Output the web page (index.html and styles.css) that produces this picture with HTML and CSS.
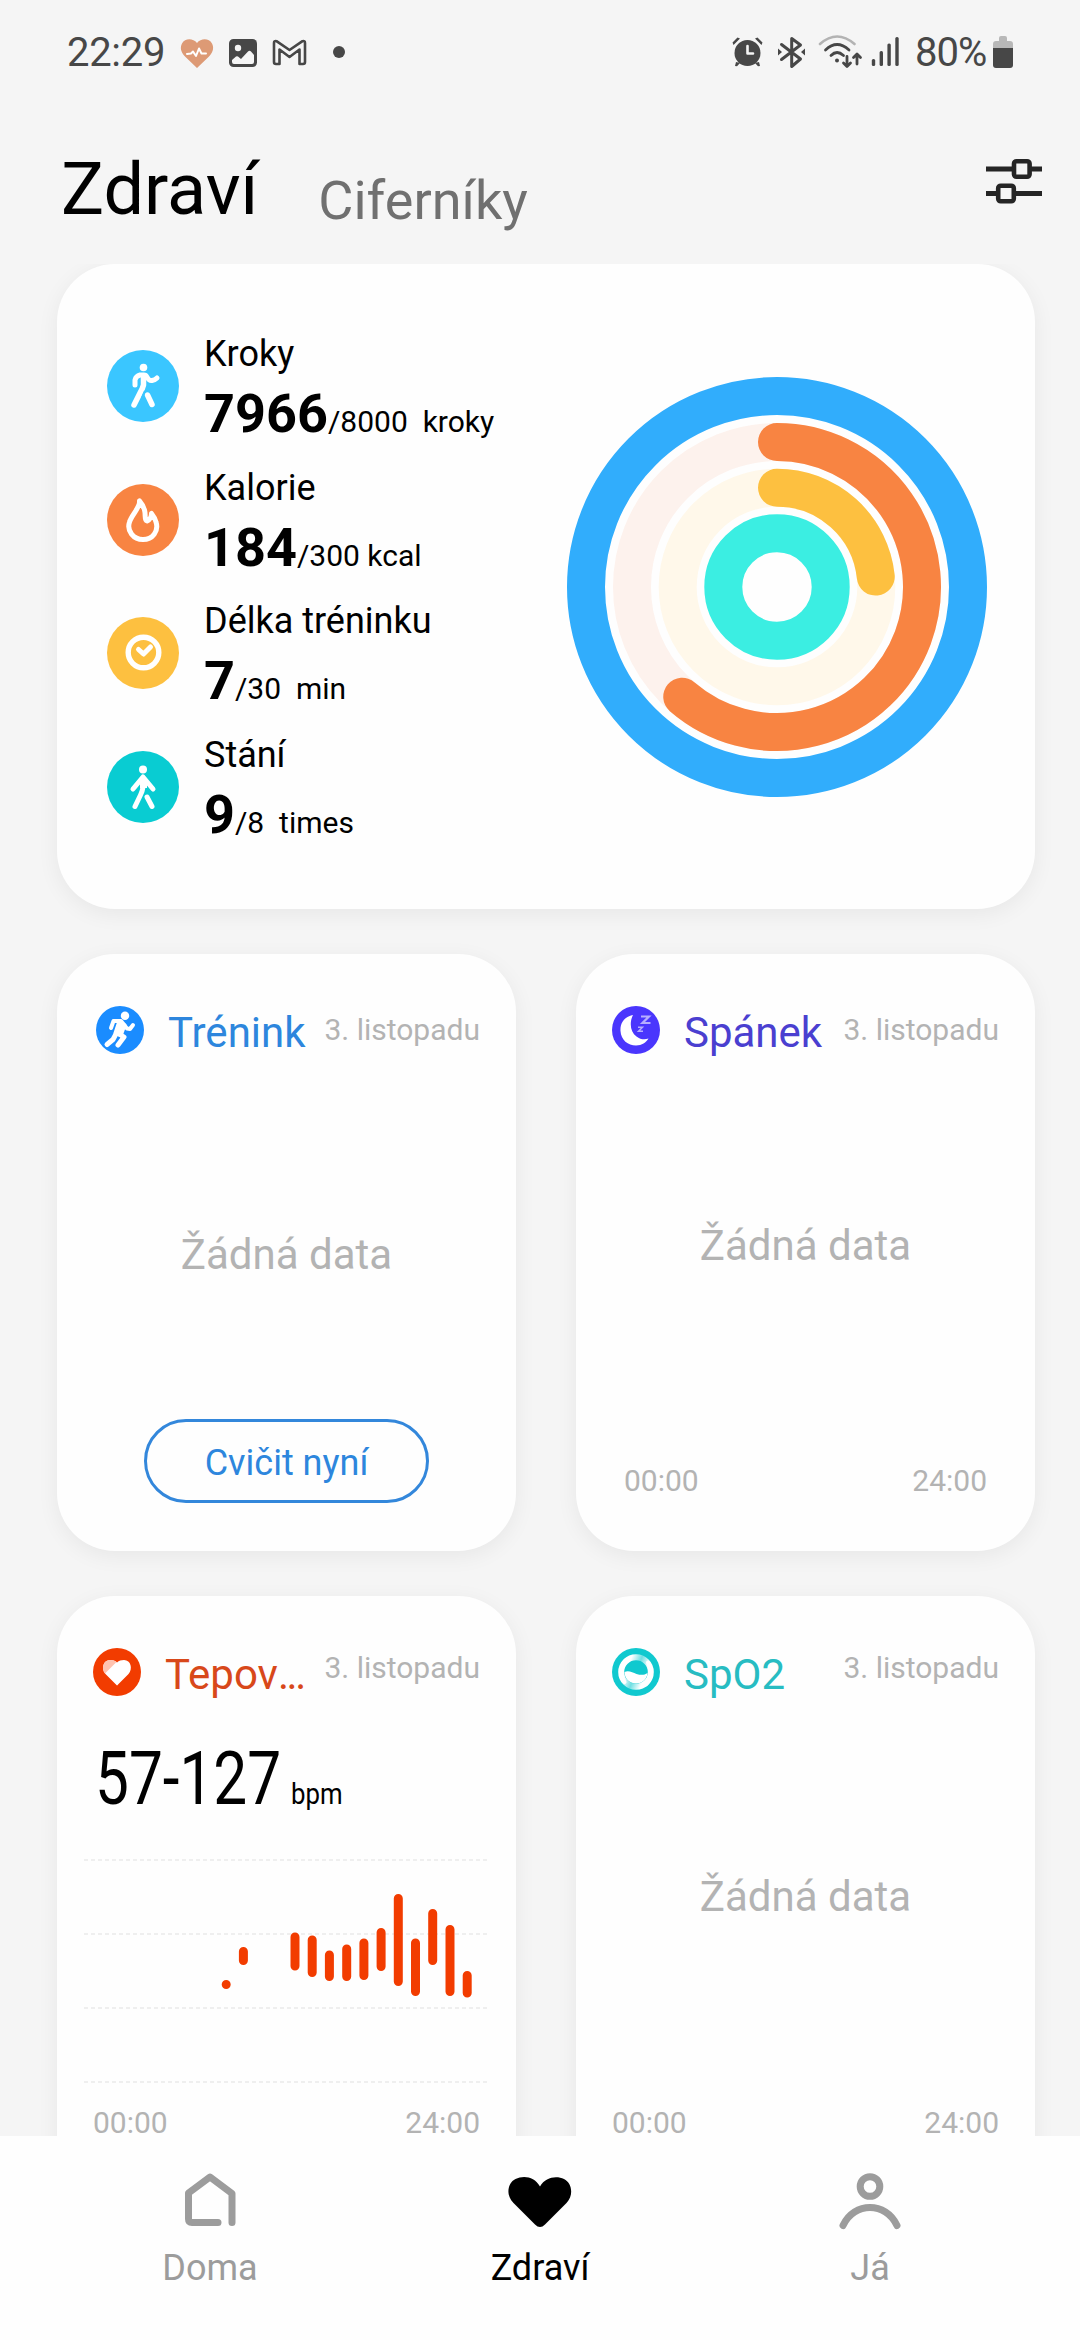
FILE: index.html
```html
<!DOCTYPE html>
<html lang="cs">
<head>
<meta charset="utf-8">
<title>Zdraví</title>
<link rel="stylesheet" href="styles.css">
</head>
<body>
<div class="screen">
  <header class="status">
    <span class="clock">22:29</span>
    <svg class="status-left" width="170" height="40" viewBox="178 32 170 40">
      <path fill="#dd9a75" d="M197 68 185 56.500C180.500 52 180 47 182 43.500c3-5.500 11-5.500 15-.5 4-5 12-5 15 .5 2 3.500 1.500 8.500-3 13z"/>
      <path class="line" stroke="#fff" stroke-width="2" d="m187 54 4-.5 2-2 3 4.500 3-7.500 2.500 5H206"/>
      <rect x="229" y="39" width="28" height="28" rx="4.500" fill="#474747"/>
      <circle cx="238" cy="48" r="3.200" fill="#f5f5f5"/>
      <path fill="#f5f5f5" d="M232 60l4-3.500q1-.7 2 0l3 2.500 7-7.500q1.500-1.300 3 0l3 3.500v7q0 2-2 2h-18q-2 0-2-2z"/>
      <path class="line" stroke="#474747" stroke-width="2.600" d="M274 62V43q0-2.500 2.500-1.800L289.500 50l13-8.800q2.500-.7 2.500 1.800v19q0 2-2 2h-3.500V49.500l-10 7.500-10-7.500V64H276q-2 0-2-2z"/>
      <circle cx="339" cy="52" r="6" fill="#474747"/>
    </svg>
    <svg class="status-right" width="172" height="40" viewBox="732 32 172 40">
      <g fill="#474747">
        <circle cx="747.500" cy="53" r="13"/>
        <path d="m733.500 45-1-2.500 5-5 2.500 1zM761.500 45l1-2.500-5-5-2.500 1zM735 66l1-4 4 1-3 3.200zM760 66l-1-4-4 1 3 3.200z"/>
        <path d="m778 48.500 4 3.500-4 3.500zM805 48.500l-4 3.500 4 3.500z"/>
        <circle cx="837" cy="60.500" r="2"/>
        <rect x="871.800" y="59" width="3.400" height="7" rx="1.500"/>
        <rect x="879.600" y="51" width="3.400" height="15" rx="1.500"/>
        <rect x="887.400" y="43.500" width="3.400" height="22.500" rx="1.500"/>
        <rect x="895.300" y="37" width="3.400" height="29" rx="1.500"/>
      </g>
      <path class="line" stroke="#f5f5f5" stroke-width="2.600" d="M747.500 46v7.500h5.500"/>
      <path class="line" stroke="#474747" stroke-width="3" d="m781.500 44.500 19 14.500-8.800 7.500V38.500l8.800 6.500-19 14.500"/>
      <path class="line" stroke="#b3b3b3" stroke-width="2.600" d="M820 44q17-15 34.500 0"/>
      <path class="line" stroke="#474747" stroke-width="2.800" d="M825.500 50q11.500-11 23.500 0M831 55.500q6-6 12.500 0M847 56.500V66m-3.500-3 3.500 3.500 3.500-3.500M857 64v-9.500m-3.500 3 3.500-3.500 3.500 3.500"/>
    </svg>
    <span class="percent">80%</span>
    <svg class="battery" width="20" height="32" viewBox="0 0 20 32">
      <path fill="#b8b8b8" d="M6 2q0-2 2-2h4q2 0 2 2v3h3q3 0 3 3v6H0V8q0-3 3-3h3z"/>
      <path fill="#474747" d="M0 12h20v17q0 3-3 3H3q-3 0-3-3z"/>
    </svg>
  </header>

  <nav class="tabs">
    <span class="tab-current">Zdraví</span>
    <span class="tab">Ciferníky</span>
    <svg class="filter" width="56" height="46" viewBox="986 158 56 46" fill="none" stroke="#252525">
      <path stroke-width="5" d="M986 169h27M1030 169h12M986 193.500h11M1014 193.500h28"/>
      <rect x="1014" y="161.200" width="15.600" height="15.600" rx="2.500" stroke-width="4.600"/>
      <rect x="998.200" y="185.700" width="15.600" height="15.600" rx="2.500" stroke-width="4.600"/>
    </svg>
  </nav>

  <main class="content">
    <section class="card summary">
      <ul class="metrics">
        <li class="metric">
          <svg class="badge" viewBox="0 0 72 72"><circle cx="36" cy="36" r="36" fill="#3ac6ff"/><circle cx="36.500" cy="17.500" r="3.800" fill="#fff"/><path class="line" stroke="#fff" stroke-width="5" d="M28 35v-5q1-4 5-5h4q2 0 3 2 2 4 5 3.500 3-.5 5-2.500"/><path class="line" stroke="#fff" stroke-width="5.500" d="M36.500 26v9q-1 4-3.500 8l-6 12M40.500 45l4.500 9.500"/><path d="M38 41l-3 7" stroke="#3ac6ff" stroke-width="2"/></svg>
          <div><p class="label">Kroky</p><p class="value"><b>7966</b>/8000&nbsp; kroky</p></div>
        </li>
        <li class="metric">
          <svg class="badge" viewBox="0 0 72 72"><circle cx="36" cy="36" r="36" fill="#f88442"/><path class="line" stroke="#fff" stroke-width="5" d="M32.500 17c1 6-8 14-10 21-3 9 4 17.500 13.500 17.500S52 47 49 38c-.7-3-2.500-6-4.500-8.500 0 3-1.500 6-4.500 7.500-3-1-1-6-2.500-11q-1.500-5-5-9z"/></svg>
          <div><p class="label">Kalorie</p><p class="value"><b>184</b>/300 kcal</p></div>
        </li>
        <li class="metric">
          <svg class="badge" viewBox="0 0 72 72"><circle cx="36" cy="36" r="36" fill="#fdc040"/><circle cx="36.500" cy="35.500" r="15.300" fill="none" stroke="#fff" stroke-width="5.400"/><path class="line" stroke="#fff" stroke-width="5" d="m31.500 32.500 5 4.500 7-7"/></svg>
          <div><p class="label">Délka tréninku</p><p class="value"><b>7</b>/30&nbsp; min</p></div>
        </li>
        <li class="metric">
          <svg class="badge" viewBox="0 0 72 72"><circle cx="36" cy="36" r="36" fill="#09ccd2"/><circle cx="36" cy="18.500" r="4" fill="#fff"/><path class="line" stroke="#fff" stroke-width="5" d="m26 38 10-12 10 12"/><path class="line" stroke="#fff" stroke-width="5" d="M36 27v9q-.5 4-2.500 8L28 55.500M40 46l5 9.500"/><path fill="#fff" d="M33 28h7v9h-7z"/></svg>
          <div><p class="label">Stání</p><p class="value"><b>9</b>/8&nbsp; times</p></div>
        </li>
      </ul>
      <svg class="rings" viewBox="-210 -210 420 420" fill="none" stroke-width="38">
        <circle r="191" stroke="#31adfc"/>
        <circle r="145" stroke="#fdf2ed"/>
        <path stroke="#f88442" stroke-linecap="round" d="M0-145A145 145 0 1 1-94.750 109.760"/>
        <circle r="99.300" stroke="#fff8ea"/>
        <path stroke="#fdc040" stroke-linecap="round" d="M0-99.300A99.300 99.300 0 0 1 98.760-10.380"/>
        <circle r="53.700" stroke="#3beee2"/>
      </svg>
    </section>

    <div class="grid">
      <section class="card tile">
        <div class="head">
          <svg class="icon" viewBox="0 0 48 48"><circle cx="24" cy="24" r="24" fill="#1a8cff"/><circle cx="29" cy="9.800" r="4.200" fill="#fff"/><path class="line" stroke="#fff" stroke-width="4" d="M15 22l2.500-7H25l6 7.500 3 .5 3-4"/><path fill="#fff" stroke="#fff" stroke-width="3" stroke-linejoin="round" d="m23 15-4 12 6 3 4-11z"/><path class="line" stroke="#fff" stroke-width="5" d="m20 28-3 5.500-6 5M24 28.500l4 2.500-6 8"/></svg>
          <h2 class="blue">Trénink</h2>
          <time>3. listopadu</time>
        </div>
        <p class="empty empty-training">Žádná data</p>
        <button class="start">Cvičit nyní</button>
      </section>

      <section class="card tile">
        <div class="head">
          <svg class="icon" viewBox="0 0 48 48"><circle cx="24" cy="24" r="24" fill="#4a36fd"/><path fill="#fff" d="M21 9C12 11 8 17 8.500 25 9 34 16 39.500 24 39.500c6 0 10-3 12.500-7-4 1.500-8 1-12-2C18.500 26 17 17 21 9z"/><path fill="none" stroke="#b6aefe" stroke-width="2.200" d="M29 10.500h8L30.500 17h8"/><path fill="none" stroke="#b6aefe" stroke-width="1.500" d="M26 21.200h4.500L26.500 25.300H31"/></svg>
          <h2 class="violet">Spánek</h2>
          <time>3. listopadu</time>
        </div>
        <p class="empty empty-sleep">Žádná data</p>
        <div class="hours hours-inset"><span>00:00</span><span>24:00</span></div>
      </section>

      <section class="card tile">
        <div class="head head-low">
          <svg class="icon icon-heart" viewBox="0 0 48 48"><circle cx="24" cy="24" r="24" fill="#f23c00"/><path fill="#fff" d="M24 37.500 12.500 26C8 21 10 12 17 12c3 0 5 .7 7 2.500C26 12.700 28 12 31 12c7 0 9 9 4.500 14L25.500 36q-1.500 1.500-1.500 1.500z"/><path fill="#ffc3b0" d="M12 25.500C8 21 10 12 17 12c3 0 5 .7 6.500 2z"/></svg>
          <h2 class="red">Tepov<span class="dots">...</span></h2>
          <time>3. listopadu</time>
        </div>
        <p class="pulse"><span class="range">57-127</span><span class="unit">bpm</span></p>
        <svg class="chart" width="405" height="226" viewBox="84 1858 405 226">
          <path stroke="#efefef" stroke-width="2" stroke-dasharray="4 3" d="M84 1860h403M84 1934h403M84 2008h403M84 2082h403"/>
          <path stroke="#f23c00" stroke-width="9" stroke-linecap="round" d="M226.200 1984.400v.1M243.400 1951.500v9M295 1937v29M312.200 1940v32.500M329.400 1955v21.500M346.700 1949v27.500M363.900 1943v32.500M381.100 1932.500v34M398.300 1898.500v83M415.500 1943v48.500M432.700 1913.500v47M450 1929.500v62M467.200 1975.500v17.500"/>
        </svg>
        <div class="hours hours-heart"><span>00:00</span><span>24:00</span></div>
      </section>

      <section class="card tile">
        <div class="head head-low">
          <svg class="icon" viewBox="0 0 48 48">
            <defs><linearGradient id="sweep" x1="0" y1=".3" x2="1" y2=".7"><stop offset=".2" stop-color="#fff"/><stop offset=".5" stop-color="#6fdfe3"/><stop offset=".8" stop-color="#fff"/></linearGradient></defs>
            <circle cx="24" cy="24" r="24" fill="#10c9cf"/>
            <circle cx="24" cy="24" r="14.800" fill="#10c9cf" stroke="url(#sweep)" stroke-width="6"/>
            <path class="line" stroke="#fff" stroke-width="4" d="M14 12q-9 10-1.500 22M34 36.500q9-10 2-22"/>
            <path fill="#fff" d="M12.500 24c4-2 8 .5 12 2 5 1.500 8 1 11-1-.5 6-5 10.500-11.500 10.500S12.500 30.500 12.500 24z"/>
          </svg>
          <h2 class="teal">SpO2</h2>
          <time>3. listopadu</time>
        </div>
        <p class="empty">Žádná data</p>
        <div class="hours"><span>00:00</span><span>24:00</span></div>
      </section>
    </div>
  </main>

  <nav class="bottom">
    <a class="item"><svg width="64" height="60" viewBox="178 2170 64 60"><path class="line" stroke="#9c9c9c" stroke-width="7" d="M218 2222.500h-26q-3.500 0-3.500-3.500v-26L210 2177l22 16.500v29"/></svg>Doma</a>
    <a class="item active"><svg width="64" height="60" viewBox="508 2170 64 60"><path d="M540 2227q-2.500 0-5-2.500L513.500 2203c-8-8-6-20 2-24 8-4 19-2.500 24.500 7.500 5.500-10 17-11 24-7.500 8 4 10 16 2.500 24L545 2224.500q-2.500 2.500-5 2.500z"/></svg>Zdraví</a>
    <a class="item"><svg width="64" height="60" viewBox="838 2170 64 60"><circle cx="870" cy="2186.500" r="9.800" fill="none" stroke="#9c9c9c" stroke-width="7"/><path class="line" stroke="#9c9c9c" stroke-width="7" d="M843 2225.500c11-24 43-24 54 0"/></svg>Já</a>
  </nav>
</div>
</body>
</html>
```
FILE: styles.css
```css
* { box-sizing: border-box; }
body { margin: 0; background: #f5f5f5; font-family: Roboto, "Noto Sans", sans-serif; color: #000; }
p, h2, ul { margin: 0; padding: 0; font-weight: 400; }
svg { display: block; flex: none; }
.line { fill: none; stroke-linecap: round; stroke-linejoin: round; }

.screen { width: 1080px; height: 2340px; display: flex; flex-direction: column; overflow: hidden; }

.status { height: 104px; padding: 0 67px; display: flex; align-items: center; color: #474747; font-size: 40px; line-height: 47px; flex: none; }
.clock { width: 111px; letter-spacing: -.3px; }
.status-right { margin-left: auto; }
.percent { width: 78px; margin-left: 11px; letter-spacing: -1px; }

.tabs { height: 160px; padding: 0 38px 0 61px; display: flex; align-items: baseline; flex: none; }
.tab-current { font-size: 72px; line-height: 84px; padding-top: 44px; }
.tab { font-size: 54px; margin-left: 60px; color: #707070; position: relative; top: 5px; }
.filter { margin-left: auto; align-self: flex-start; margin-top: 54px; }

.content { flex: 1; min-height: 0; overflow: hidden; padding: 0 45px 0 57px; display: flex; flex-direction: column; gap: 45px; }
.card { background: #fefefe; border-radius: 58px; box-shadow: 0 5px 22px rgba(0, 0, 0, .06); }

.summary { height: 645px; flex: none; display: flex; justify-content: space-between; padding: 66px 48px 0 50px; }
.metrics { list-style: none; display: flex; flex-direction: column; }
.metric { display: flex; height: 133.700px; gap: 25px; }
.badge { width: 72px; height: 72px; margin-top: 20px; }
.label { font-size: 36px; line-height: 42px; padding-top: 3px; }
.value { font-size: 30px; line-height: 64px; padding-top: 7px; white-space: nowrap; }
.value b { font-size: 54px; font-weight: 700; }
.rings { width: 420px; height: 420px; margin-top: 47px; }

.grid { display: grid; grid-template-columns: 459px 459px; justify-content: space-between; grid-auto-rows: 597px; row-gap: 45px; }
.tile { padding: 52px 36px 0 39px; display: flex; flex-direction: column; }
.head { display: flex; height: 48px; align-items: flex-start; flex: none; }
.icon { width: 48px; height: 48px; }
.grid .tile:nth-child(even) { padding-left: 36px; }
.tile h2 { font-size: 42px; line-height: 50px; margin: 2px 0 0 24px; white-space: nowrap; }
.dots { letter-spacing: -2.400px; }
.tile time { font-size: 30px; line-height: 36px; margin: 6px 0 0 auto; color: #b3b3b3; white-space: nowrap; }
.tile .head-low time { margin-top: 2px; }
.icon-heart { margin-left: -3px; }
.blue { color: #2d86dd; }
.violet { color: #4a3fd0; }
.red { color: #d8481a; }
.teal { color: #27bcc2; }

.empty { font-size: 42px; line-height: 50px; margin-top: 176px; text-align: center; color: #b3b3b3; }
.empty-training { margin-left: -3px; }
.empty-sleep { margin-top: 167px; }
.start { width: 285px; height: 84px; margin: 139px 0 0 48px; border: 3px solid #3387db; border-radius: 42px; background: none; color: #2d86dd; font: 36px/42px Roboto, sans-serif; padding: 3px 0 0; }
.hours { display: flex; justify-content: space-between; font-size: 30px; line-height: 36px; color: #b3b3b3; margin-top: auto; padding-bottom: 52px; }
.hours-inset { padding: 0 12px 52px; }
.hours-heart { margin-left: -3px; }

.pulse { display: flex; align-items: baseline; height: 80px; margin: 43px 0 0 -1px; white-space: nowrap; }
.range { font-size: 74px; line-height: 80px; width: 196px; transform: scaleX(.815); transform-origin: 0 0; }
.unit { font-size: 30px; transform: scaleX(.86); transform-origin: 0 0; }
.chart { margin: 39px 0 0 -12px; }

.bottom { height: 204px; flex: none; background: #fefefe; padding: 34px 45px 0; display: grid; grid-template-columns: repeat(3, 1fr); }
.item { display: flex; flex-direction: column; align-items: center; gap: 17px; font-size: 36px; line-height: 42px; color: #9c9c9c; }
.active { color: #000; }
```
